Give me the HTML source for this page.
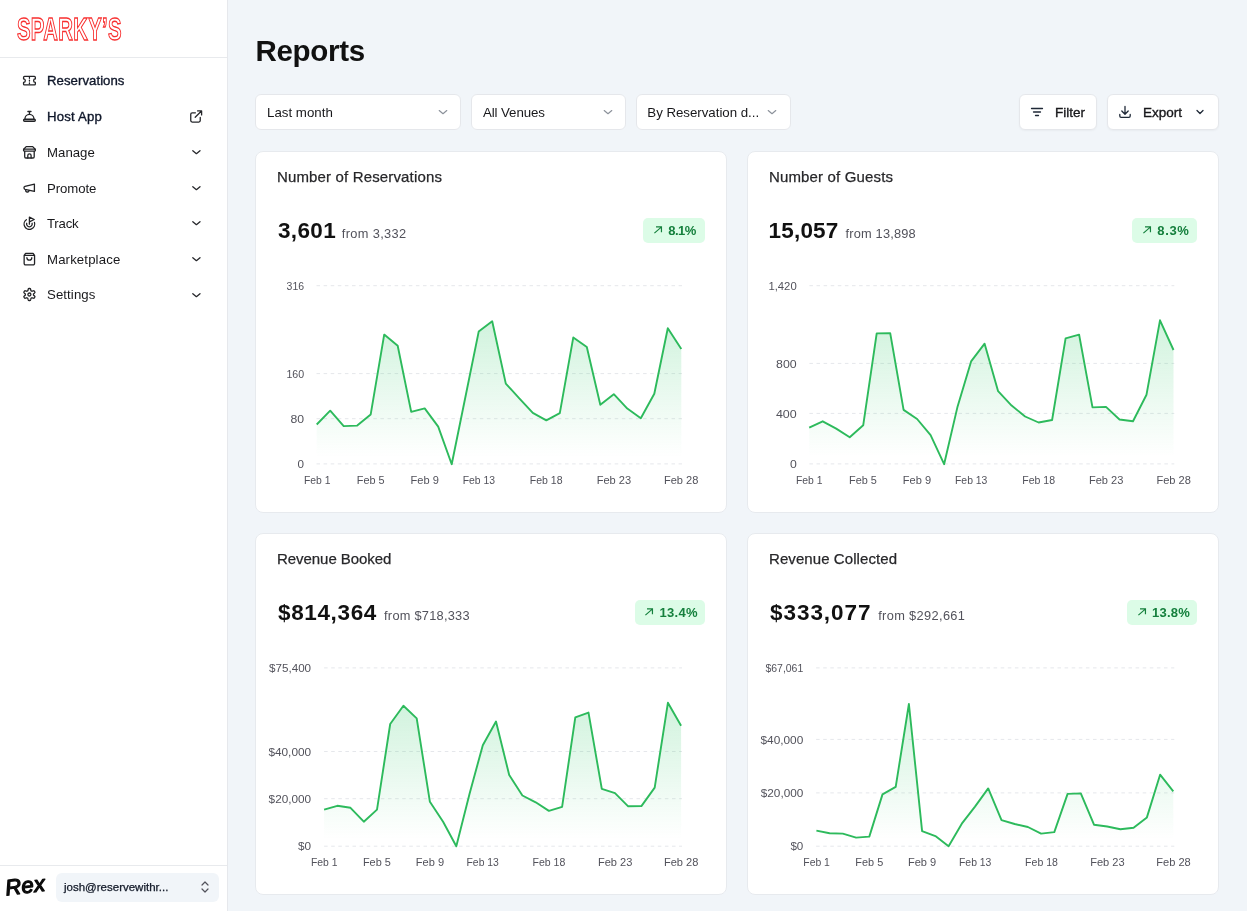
<!DOCTYPE html>
<html lang="en"><head><meta charset="utf-8"><title>Reports</title>
<style>
*{box-sizing:border-box;margin:0;padding:0}
html,body{width:1247px;height:911px;overflow:hidden}
body{position:relative;background:#f1f5f9;font-family:"Liberation Sans",Arial,sans-serif;color:#0f172a}
.side{position:absolute;left:0;top:0;width:228px;height:911px;background:#fff;border-right:1px solid #e6e8ec}
.hr1{position:absolute;left:0;top:57px;width:227px;height:1px;background:#e8eaed}
.hr2{position:absolute;left:0;top:865px;width:227px;height:1px;background:#e8eaed}
.ni{position:absolute;left:21px;width:16px;height:16px;fill:none;stroke:#222326;stroke-width:1.3;stroke-linecap:round;stroke-linejoin:round}
.nr{position:absolute;left:190px;width:12px;height:12px;fill:none;stroke:#26272b;stroke-width:1.3;stroke-linecap:round;stroke-linejoin:round}
.nt{position:absolute;left:47px;height:20px;line-height:20px;font-size:13.2px;font-weight:400;color:#18181b;white-space:nowrap}
.nt.md{color:#0f172a;-webkit-text-stroke:0.35px #0f172a}
.user{position:absolute;left:56px;top:873px;width:163px;height:29px;background:#f1f5f9;border-radius:6px;font-size:11.5px;line-height:29px;padding-left:8px;color:#111827;-webkit-text-stroke:0.25px #111827}
h1{position:absolute;left:255.5px;top:31px;font-size:29.5px;line-height:40px;font-weight:700;color:#111;letter-spacing:-0.3px}
.sel{position:absolute;top:94px;height:36px;background:#fff;border:1px solid #e5e7eb;border-radius:6px;font-size:13.3px;line-height:35px;padding-left:11px;color:#18181b;white-space:nowrap}
.sel svg{position:absolute;top:11px;width:12px;height:12px;fill:none;stroke:#8b919a;stroke-width:1.15;stroke-linecap:round;stroke-linejoin:round}
.btn{position:absolute;top:94px;height:36px;background:#fff;border:1px solid #e5e7eb;border-radius:6px;font-size:13.5px;line-height:35px;color:#18181b;white-space:nowrap;-webkit-text-stroke:0.35px #18181b;box-shadow:0 1px 2px rgba(0,0,0,0.04)}
.btn span{position:absolute;top:0}
.btn svg{position:absolute;fill:none;stroke:#1f2937;stroke-width:1.3;stroke-linecap:round;stroke-linejoin:round}
.card{position:absolute;width:472px;height:362px;background:#fff;border:1px solid #e7eaee;border-radius:8px}
.ct{position:absolute;left:21px;top:15px;font-size:15px;line-height:20px;color:#27272a;-webkit-text-stroke:0.25px #27272a;white-space:nowrap}
.cv{position:absolute;left:22px;top:62.6px;line-height:32px;white-space:nowrap}
.big{font-size:22.5px;font-weight:700;color:#111}
.from{font-size:12.8px;color:#52525b}
.badge{position:absolute;right:21.5px;top:66px;height:25px;background:#dcfce7;border-radius:5px;padding:0 0 0 9.4px;font-size:13px;font-weight:700;color:#15803d;line-height:25px;white-space:nowrap}
.badge svg{display:inline-block;vertical-align:0.1px;margin-right:5.6px}
.chart{position:absolute;left:0;top:0;width:1247px;height:911px;pointer-events:none}
.gl{stroke:#e5e7eb;stroke-width:1;stroke-dasharray:3.55 3.55}
.ax{font-size:11.5px;fill:#52525b;font-family:"Liberation Sans",Arial,sans-serif}
.ln{fill:none;stroke:#2dba5c;stroke-width:1.9;stroke-linejoin:round;stroke-linecap:butt}
</style></head><body><div id="root" style="position:absolute;left:0;top:0;width:1247px;height:911px;will-change:transform">
<div class="side">
<svg style="position:absolute;left:0;top:0" width="160" height="57" viewBox="0 0 160 57"><text x="0" y="0" transform="translate(17,40) scale(0.635,1)" font-family="Liberation Sans, Arial, sans-serif" font-weight="700" font-size="32" fill="#fff" stroke="#f83030" stroke-width="1.35" letter-spacing="0.5">SPARKY’S</text></svg>
<div class="hr1"></div>
<svg class="ni" style="top:73px" viewBox="0 0 16 16"><path d="M3.5 3.45 H13.4 a0.95 0.95 0 0 1 0.95 0.95 V5.9 a1.75 1.75 0 0 0 0 3.5 V10.9 a0.95 0.95 0 0 1 -0.95 0.95 H3.5 a0.95 0.95 0 0 1 -0.95 -0.95 V9.4 a1.75 1.75 0 0 0 0 -3.5 V4.4 a0.95 0.95 0 0 1 0.95 -0.95 Z"/><path d="M8.45 4.5 V5.3 M8.45 7.2 V8.1 M8.45 10 V10.8" /></svg><div class="nt md" style="top:71.37px;letter-spacing:0.045px">Reservations</div><svg class="ni" style="top:108px" viewBox="0 0 16 16"><path d="M3.95 10.9 A4.5 4.5 0 0 1 12.95 10.9"/><rect x="2.55" y="11.25" width="11.8" height="2.1" rx="1.05" fill="#a3a3a3"/><path d="M8.45 5.9 V3.5 M6.9 3.5 H10"/></svg><div class="nt md" style="top:107.17px;letter-spacing:0.19px">Host App</div><svg class="nr" style="top:109px;left:189px;width:15px;height:15px" viewBox="0 0 15 15"><path d="M6.4 3.85 H3.2 A1.45 1.45 0 0 0 1.75 5.3 V11.6 A1.45 1.45 0 0 0 3.2 13.05 H9.8 A1.45 1.45 0 0 0 11.25 11.6 V8.4"/><path d="M8.6 1.9 H12.6 V5.9 M12.5 2 L6.2 8.3"/></svg><svg class="ni" style="top:144px" viewBox="0 0 16 16"><path d="M2.7 5.2 L5.2 2.6 H11.7 L14.2 5.2"/><rect x="2.55" y="5.2" width="11.8" height="1.9" rx="0.5"/><path d="M3.7 7.3 V12.8 a1.2 1.2 0 0 0 1.2 1.2 H12 a1.2 1.2 0 0 0 1.2 -1.2 V7.3"/><path d="M6.8 14 V11.5 a1.65 1.65 0 0 1 3.3 0 V14"/></svg><div class="nt" style="top:143.07px;letter-spacing:0.03px">Manage</div><svg class="nr" style="top:146px" viewBox="0 0 12 12"><path d="M2.8 4.7 L6.4 7.7 L10 4.7"/></svg><svg class="ni" style="top:180px" viewBox="0 0 16 16"><path d="M13.4 4.1 L4.0 6.3 A1.6 1.6 0 0 0 4.0 9.3 L13.4 11.4 Z"/><path d="M4.7 9.7 V10.5 A1.6 1.3 0 0 0 8 10.8 V10.4"/></svg><div class="nt" style="top:178.57px;letter-spacing:-0.08px">Promote</div><svg class="nr" style="top:182px" viewBox="0 0 12 12"><path d="M2.8 4.7 L6.4 7.7 L10 4.7"/></svg><svg class="ni" style="top:215px" viewBox="0 0 16 16"><path d="M8.4 9.2 V2.2 L13.2 4.5 L8.4 6.8"/><path d="M5.36 4.66 A5.3 5.3 0 1 0 13.44 7.36"/><path d="M5.7 8.27 A2.8 2.8 0 1 0 11.1 8.27"/></svg><div class="nt" style="top:213.77px;letter-spacing:-0.2px">Track</div><svg class="nr" style="top:217px" viewBox="0 0 12 12"><path d="M2.8 4.7 L6.4 7.7 L10 4.7"/></svg><svg class="ni" style="top:251px" viewBox="0 0 16 16"><path d="M3.15 4.3 L4.6 2.35 H12.1 L13.55 4.3 V12.6 a1.35 1.35 0 0 1 -1.35 1.35 H4.5 a1.35 1.35 0 0 1 -1.35 -1.35 Z M3.15 4.3 H13.55"/><path d="M5.9 6.7 A2.45 2.45 0 0 0 10.8 6.7"/></svg><div class="nt" style="top:249.67px;letter-spacing:0.14px">Marketplace</div><svg class="nr" style="top:253px" viewBox="0 0 12 12"><path d="M2.8 4.7 L6.4 7.7 L10 4.7"/></svg><svg class="ni" style="top:287px" viewBox="0 0 16 16"><circle cx="8.4" cy="7.5" r="1.5"/><path d="M8.40 1.50 L8.66 1.51 L8.92 1.52 L9.18 1.55 L9.41 1.78 L9.58 2.19 L9.71 2.62 L9.80 3.06 L9.87 3.47 L9.97 3.71 L10.13 3.78 L10.29 3.86 L10.45 3.95 L10.60 4.04 L10.75 4.14 L10.90 4.25 L11.16 4.21 L11.55 4.07 L11.97 3.93 L12.41 3.82 L12.85 3.77 L13.16 3.85 L13.31 4.06 L13.46 4.28 L13.60 4.50 L13.72 4.73 L13.84 4.96 L13.94 5.20 L13.86 5.51 L13.59 5.86 L13.28 6.19 L12.95 6.49 L12.62 6.76 L12.46 6.96 L12.48 7.14 L12.50 7.32 L12.50 7.50 L12.50 7.68 L12.48 7.86 L12.46 8.04 L12.62 8.24 L12.95 8.51 L13.28 8.81 L13.59 9.14 L13.86 9.49 L13.94 9.80 L13.84 10.04 L13.72 10.27 L13.60 10.50 L13.46 10.72 L13.31 10.94 L13.16 11.15 L12.85 11.23 L12.41 11.18 L11.97 11.07 L11.55 10.93 L11.16 10.79 L10.90 10.75 L10.75 10.86 L10.60 10.96 L10.45 11.05 L10.29 11.14 L10.13 11.22 L9.97 11.29 L9.87 11.53 L9.80 11.94 L9.71 12.38 L9.58 12.81 L9.41 13.22 L9.18 13.45 L8.92 13.48 L8.66 13.49 L8.40 13.50 L8.14 13.49 L7.88 13.48 L7.62 13.45 L7.39 13.22 L7.22 12.81 L7.09 12.38 L7.00 11.94 L6.93 11.53 L6.83 11.29 L6.67 11.22 L6.51 11.14 L6.35 11.05 L6.20 10.96 L6.05 10.86 L5.90 10.75 L5.64 10.79 L5.25 10.93 L4.83 11.07 L4.39 11.18 L3.95 11.23 L3.64 11.15 L3.49 10.94 L3.34 10.72 L3.20 10.50 L3.08 10.27 L2.96 10.04 L2.86 9.80 L2.94 9.49 L3.21 9.14 L3.52 8.81 L3.85 8.51 L4.18 8.24 L4.34 8.04 L4.32 7.86 L4.30 7.68 L4.30 7.50 L4.30 7.32 L4.32 7.14 L4.34 6.96 L4.18 6.76 L3.85 6.49 L3.52 6.19 L3.21 5.86 L2.94 5.51 L2.86 5.20 L2.96 4.96 L3.08 4.73 L3.20 4.50 L3.34 4.28 L3.49 4.06 L3.64 3.85 L3.95 3.77 L4.39 3.82 L4.83 3.93 L5.25 4.07 L5.64 4.21 L5.90 4.25 L6.05 4.14 L6.20 4.04 L6.35 3.95 L6.51 3.86 L6.67 3.78 L6.83 3.71 L6.93 3.47 L7.00 3.06 L7.09 2.62 L7.22 2.19 L7.39 1.78 L7.62 1.55 L7.88 1.52 L8.14 1.51 Z"/></svg><div class="nt" style="top:285.37px;letter-spacing:0.1px">Settings</div><svg class="nr" style="top:289px" viewBox="0 0 12 12"><path d="M2.8 4.7 L6.4 7.7 L10 4.7"/></svg>
<div class="hr2"></div>
<svg style="position:absolute;left:0;top:866px" width="56" height="45" viewBox="0 0 56 45"><text transform="translate(6.3,29.4) rotate(-7)" font-family="Liberation Sans, Arial, sans-serif" font-style="italic" font-weight="400" font-size="22" fill="#0a0a0a" stroke="#0a0a0a" stroke-width="1.3" stroke-linejoin="round" stroke-linecap="round" letter-spacing="0.3">Rex</text></svg>
<div class="user">josh@reservewithr...<svg style="position:absolute;left:143px;top:7px" width="12" height="14" viewBox="0 0 12 14" fill="none" stroke="#52525b" stroke-width="1.2" stroke-linecap="round" stroke-linejoin="round"><path d="M3 5 L6 2 L9 5 M3 9 L6 12 L9 9"/></svg></div>
</div>
<h1>Reports</h1>
<div class="sel" style="left:255px;width:206px">Last month<svg style="left:180.5px" viewBox="0 0 12 12"><path d="M2.2 4.5 L6 7.7 L9.8 4.5"/></svg></div>
<div class="sel" style="left:471px;width:155px;letter-spacing:-0.1px">All Venues<svg style="left:129.5px" viewBox="0 0 12 12"><path d="M2.2 4.5 L6 7.7 L9.8 4.5"/></svg></div>
<div class="sel" style="left:636px;width:155px;padding-left:10.3px;letter-spacing:-0.03px">By Reservation d...<svg style="left:129.3px" viewBox="0 0 12 12"><path d="M2.2 4.5 L6 7.7 L9.8 4.5"/></svg></div>
<div class="btn" style="left:1019px;width:78px"><svg style="left:10px;top:10px" width="14" height="14" viewBox="0 0 14 14"><path d="M1.5 3.5 H12.5 M3.5 7 H10.5 M5.5 10.5 H8.5"/></svg><span style="left:35px">Filter</span></div>
<div class="btn" style="left:1107px;width:112px"><svg style="left:10px;top:10px" width="14" height="14" viewBox="0 0 14 14"><path d="M7 1.5 V9 M3.8 6 L7 9.2 L10.2 6 M1.8 9.5 V11 A1.3 1.3 0 0 0 3.1 12.3 H10.9 A1.3 1.3 0 0 0 12.2 11 V9.5"/></svg><span style="left:35px">Export</span><svg style="left:86px;top:11px" width="12" height="12" viewBox="0 0 12 12"><path d="M3 4.5 L6 7.5 L9 4.5"/></svg></div>
<div class="card" style="left:255px;top:151px">
<div class="ct" style="letter-spacing:0.15px">Number of Reservations</div>
<div class="cv"><span class="big" style="letter-spacing:0.36px;margin-left:0px">3,601</span><span class="from" style="letter-spacing:0.35px;margin-left:5.7px">from 3,332</span></div>
<div class="badge" style="width:61.3px"><svg width="10" height="10" viewBox="0 0 10 10"><path d="M1.4 8.1 L8.3 2.1 M3 1.95 H8.45 V7.3" fill="none" stroke="#15803d" stroke-width="1.2"/></svg><span style="letter-spacing:-0.5px">8.1%</span></div>
</div>
<div class="card" style="left:747px;top:151px">
<div class="ct" style="letter-spacing:0.15px">Number of Guests</div>
<div class="cv"><span class="big" style="letter-spacing:0.18px;margin-left:-1.4px">15,057</span><span class="from" style="letter-spacing:0.17px;margin-left:7.1px">from 13,898</span></div>
<div class="badge" style="width:64.2px"><svg width="10" height="10" viewBox="0 0 10 10"><path d="M1.4 8.1 L8.3 2.1 M3 1.95 H8.45 V7.3" fill="none" stroke="#15803d" stroke-width="1.2"/></svg><span style="letter-spacing:0.63px">8.3%</span></div>
</div>
<div class="card" style="left:255px;top:533px">
<div class="ct" style="letter-spacing:-0.05px">Revenue Booked</div>
<div class="cv"><span class="big" style="letter-spacing:0.64px;margin-left:0px">$814,364</span><span class="from" style="letter-spacing:0.25px;margin-left:7.1px">from $718,333</span></div>
<div class="badge" style="width:70px"><svg width="10" height="10" viewBox="0 0 10 10"><path d="M1.4 8.1 L8.3 2.1 M3 1.95 H8.45 V7.3" fill="none" stroke="#15803d" stroke-width="1.2"/></svg><span style="letter-spacing:0.33px">13.4%</span></div>
</div>
<div class="card" style="left:747px;top:533px">
<div class="ct" style="letter-spacing:0.08px">Revenue Collected</div>
<div class="cv"><span class="big" style="letter-spacing:0.95px;margin-left:0px">$333,077</span><span class="from" style="letter-spacing:0.35px;margin-left:6.75px">from $292,661</span></div>
<div class="badge" style="width:69.4px"><svg width="10" height="10" viewBox="0 0 10 10"><path d="M1.4 8.1 L8.3 2.1 M3 1.95 H8.45 V7.3" fill="none" stroke="#15803d" stroke-width="1.2"/></svg><span style="letter-spacing:0.2px">13.8%</span></div>
</div>

<svg class="chart" viewBox="0 0 1247 911"><defs></defs>
<linearGradient id="g1" gradientUnits="userSpaceOnUse" x1="0" y1="321.3" x2="0" y2="463.9"><stop offset="0" stop-color="#22c55e" stop-opacity="0.21"/><stop offset="0.95" stop-color="#22c55e" stop-opacity="0"/></linearGradient>
<line x1="316.5" y1="285.7" x2="682" y2="285.7" class="gl"/>
<text x="304.1" y="289.9" text-anchor="end" class="ax" textLength="17.5" lengthAdjust="spacingAndGlyphs">316</text>
<line x1="316.5" y1="373.6" x2="682" y2="373.6" class="gl"/>
<text x="304.1" y="377.8" text-anchor="end" class="ax" textLength="17.7" lengthAdjust="spacingAndGlyphs">160</text>
<line x1="316.5" y1="418.7" x2="682" y2="418.7" class="gl"/>
<text x="304.1" y="422.9" text-anchor="end" class="ax" textLength="13.6" lengthAdjust="spacingAndGlyphs">80</text>
<line x1="316.5" y1="463.9" x2="682" y2="463.9" class="gl"/>
<text x="304.1" y="468.1" text-anchor="end" class="ax" textLength="6.5" lengthAdjust="spacingAndGlyphs">0</text>
<path d="M316.7,424.5 L330.2,410.7 L343.7,426.1 L357.2,425.6 L370.7,414.4 L384.2,334.6 L397.7,345.8 L411.2,411.9 L424.7,408.4 L438.2,426.6 L451.7,464.2 L465.2,398.0 L478.7,331.6 L492.2,321.3 L505.8,383.6 L519.3,398.3 L532.8,412.9 L546.3,420.3 L559.8,413.2 L573.3,337.4 L586.8,347.0 L600.3,404.8 L613.8,394.2 L627.3,408.6 L640.8,418.2 L654.3,393.7 L667.8,328.3 L681.3,349.0 L681.3,463.9 L316.7,463.9 Z" fill="url(#g1)"/>
<path d="M316.7,424.5 L330.2,410.7 L343.7,426.1 L357.2,425.6 L370.7,414.4 L384.2,334.6 L397.7,345.8 L411.2,411.9 L424.7,408.4 L438.2,426.6 L451.7,464.2 L465.2,398.0 L478.7,331.6 L492.2,321.3 L505.8,383.6 L519.3,398.3 L532.8,412.9 L546.3,420.3 L559.8,413.2 L573.3,337.4 L586.8,347.0 L600.3,404.8 L613.8,394.2 L627.3,408.6 L640.8,418.2 L654.3,393.7 L667.8,328.3 L681.3,349.0" class="ln"/>
<text x="317.2" y="484.2" text-anchor="middle" class="ax" textLength="26.6" lengthAdjust="spacingAndGlyphs">Feb 1</text>
<text x="370.7" y="484.2" text-anchor="middle" class="ax" textLength="27.9" lengthAdjust="spacingAndGlyphs">Feb 5</text>
<text x="424.7" y="484.2" text-anchor="middle" class="ax" textLength="28.3" lengthAdjust="spacingAndGlyphs">Feb 9</text>
<text x="478.9" y="484.2" text-anchor="middle" class="ax" textLength="32.4" lengthAdjust="spacingAndGlyphs">Feb 13</text>
<text x="546.2" y="484.2" text-anchor="middle" class="ax" textLength="32.8" lengthAdjust="spacingAndGlyphs">Feb 18</text>
<text x="613.9000000000001" y="484.2" text-anchor="middle" class="ax" textLength="34.5" lengthAdjust="spacingAndGlyphs">Feb 23</text>
<text x="681.2" y="484.2" text-anchor="middle" class="ax" textLength="34.5" lengthAdjust="spacingAndGlyphs">Feb 28</text>
<linearGradient id="g2" gradientUnits="userSpaceOnUse" x1="0" y1="320.3" x2="0" y2="463.9"><stop offset="0" stop-color="#22c55e" stop-opacity="0.21"/><stop offset="0.95" stop-color="#22c55e" stop-opacity="0"/></linearGradient>
<line x1="809.4" y1="285.7" x2="1174.3" y2="285.7" class="gl"/>
<text x="796.7" y="289.9" text-anchor="end" class="ax" textLength="28.3" lengthAdjust="spacingAndGlyphs">1,420</text>
<line x1="809.4" y1="363.4" x2="1174.3" y2="363.4" class="gl"/>
<text x="796.7" y="367.6" text-anchor="end" class="ax" textLength="20.6" lengthAdjust="spacingAndGlyphs">800</text>
<line x1="809.4" y1="413.4" x2="1174.3" y2="413.4" class="gl"/>
<text x="796.7" y="417.6" text-anchor="end" class="ax" textLength="20.8" lengthAdjust="spacingAndGlyphs">400</text>
<line x1="809.4" y1="463.9" x2="1174.3" y2="463.9" class="gl"/>
<text x="796.7" y="468.1" text-anchor="end" class="ax" textLength="6.8" lengthAdjust="spacingAndGlyphs">0</text>
<path d="M809.2,427.6 L822.7,421.3 L836.2,428.6 L849.7,437.2 L863.2,425.3 L876.7,333.4 L890.2,333.1 L903.6,409.9 L917.1,419.0 L930.6,435.2 L944.1,464.2 L957.6,406.4 L971.1,361.4 L984.6,343.7 L998.1,391.2 L1011.6,405.6 L1025.1,416.5 L1038.6,422.5 L1052.1,420.0 L1065.6,338.4 L1079.1,334.6 L1092.5,407.4 L1106.0,406.9 L1119.5,419.5 L1133.0,421.3 L1146.5,394.7 L1160.0,320.3 L1173.5,350.0 L1173.5,463.9 L809.2,463.9 Z" fill="url(#g2)"/>
<path d="M809.2,427.6 L822.7,421.3 L836.2,428.6 L849.7,437.2 L863.2,425.3 L876.7,333.4 L890.2,333.1 L903.6,409.9 L917.1,419.0 L930.6,435.2 L944.1,464.2 L957.6,406.4 L971.1,361.4 L984.6,343.7 L998.1,391.2 L1011.6,405.6 L1025.1,416.5 L1038.6,422.5 L1052.1,420.0 L1065.6,338.4 L1079.1,334.6 L1092.5,407.4 L1106.0,406.9 L1119.5,419.5 L1133.0,421.3 L1146.5,394.7 L1160.0,320.3 L1173.5,350.0" class="ln"/>
<text x="809.2" y="484.2" text-anchor="middle" class="ax" textLength="26.6" lengthAdjust="spacingAndGlyphs">Feb 1</text>
<text x="863.0" y="484.2" text-anchor="middle" class="ax" textLength="27.9" lengthAdjust="spacingAndGlyphs">Feb 5</text>
<text x="917.0" y="484.2" text-anchor="middle" class="ax" textLength="28.3" lengthAdjust="spacingAndGlyphs">Feb 9</text>
<text x="971.2" y="484.2" text-anchor="middle" class="ax" textLength="32.4" lengthAdjust="spacingAndGlyphs">Feb 13</text>
<text x="1038.7" y="484.2" text-anchor="middle" class="ax" textLength="32.8" lengthAdjust="spacingAndGlyphs">Feb 18</text>
<text x="1106.2" y="484.2" text-anchor="middle" class="ax" textLength="34.5" lengthAdjust="spacingAndGlyphs">Feb 23</text>
<text x="1173.7" y="484.2" text-anchor="middle" class="ax" textLength="34.5" lengthAdjust="spacingAndGlyphs">Feb 28</text>
<linearGradient id="g3" gradientUnits="userSpaceOnUse" x1="0" y1="702.8" x2="0" y2="846.2"><stop offset="0" stop-color="#22c55e" stop-opacity="0.21"/><stop offset="0.95" stop-color="#22c55e" stop-opacity="0"/></linearGradient>
<line x1="324.1" y1="667.9" x2="682" y2="667.9" class="gl"/>
<text x="311.1" y="672.1" text-anchor="end" class="ax" textLength="42.1" lengthAdjust="spacingAndGlyphs">$75,400</text>
<line x1="324.1" y1="751.5" x2="682" y2="751.5" class="gl"/>
<text x="311.1" y="755.7" text-anchor="end" class="ax" textLength="42.7" lengthAdjust="spacingAndGlyphs">$40,000</text>
<line x1="324.1" y1="798.7" x2="682" y2="798.7" class="gl"/>
<text x="311.1" y="802.9" text-anchor="end" class="ax" textLength="42.5" lengthAdjust="spacingAndGlyphs">$20,000</text>
<line x1="324.1" y1="846.2" x2="682" y2="846.2" class="gl"/>
<text x="311.1" y="850.4" text-anchor="end" class="ax" textLength="13.1" lengthAdjust="spacingAndGlyphs">$0</text>
<path d="M324.1,809.6 L337.3,805.8 L350.5,807.8 L363.8,821.7 L377.0,809.6 L390.2,724.0 L403.4,705.8 L416.7,718.4 L429.9,801.8 L443.1,821.7 L456.3,846.3 L469.5,793.9 L482.8,745.2 L496.0,721.5 L509.2,775.0 L522.4,795.5 L535.7,802.3 L548.9,810.9 L562.1,806.8 L575.3,717.4 L588.5,712.6 L601.8,788.9 L615.0,793.2 L628.2,806.3 L641.4,806.1 L654.7,787.6 L667.9,702.8 L681.1,725.8 L681.1,846.2 L324.1,846.2 Z" fill="url(#g3)"/>
<path d="M324.1,809.6 L337.3,805.8 L350.5,807.8 L363.8,821.7 L377.0,809.6 L390.2,724.0 L403.4,705.8 L416.7,718.4 L429.9,801.8 L443.1,821.7 L456.3,846.3 L469.5,793.9 L482.8,745.2 L496.0,721.5 L509.2,775.0 L522.4,795.5 L535.7,802.3 L548.9,810.9 L562.1,806.8 L575.3,717.4 L588.5,712.6 L601.8,788.9 L615.0,793.2 L628.2,806.3 L641.4,806.1 L654.7,787.6 L667.9,702.8 L681.1,725.8" class="ln"/>
<text x="324.2" y="866.2" text-anchor="middle" class="ax" textLength="26.6" lengthAdjust="spacingAndGlyphs">Feb 1</text>
<text x="376.9" y="866.2" text-anchor="middle" class="ax" textLength="27.9" lengthAdjust="spacingAndGlyphs">Feb 5</text>
<text x="429.9" y="866.2" text-anchor="middle" class="ax" textLength="28.3" lengthAdjust="spacingAndGlyphs">Feb 9</text>
<text x="482.7" y="866.2" text-anchor="middle" class="ax" textLength="32.4" lengthAdjust="spacingAndGlyphs">Feb 13</text>
<text x="548.9000000000001" y="866.2" text-anchor="middle" class="ax" textLength="32.8" lengthAdjust="spacingAndGlyphs">Feb 18</text>
<text x="615.2" y="866.2" text-anchor="middle" class="ax" textLength="34.5" lengthAdjust="spacingAndGlyphs">Feb 23</text>
<text x="681.2" y="866.2" text-anchor="middle" class="ax" textLength="34.5" lengthAdjust="spacingAndGlyphs">Feb 28</text>
<linearGradient id="g4" gradientUnits="userSpaceOnUse" x1="0" y1="704.0" x2="0" y2="846.2"><stop offset="0" stop-color="#22c55e" stop-opacity="0.21"/><stop offset="0.95" stop-color="#22c55e" stop-opacity="0"/></linearGradient>
<line x1="816.1" y1="667.9" x2="1174.3" y2="667.9" class="gl"/>
<text x="803.3" y="672.1" text-anchor="end" class="ax" textLength="37.9" lengthAdjust="spacingAndGlyphs">$67,061</text>
<line x1="816.1" y1="739.4" x2="1174.3" y2="739.4" class="gl"/>
<text x="803.3" y="743.6" text-anchor="end" class="ax" textLength="42.8" lengthAdjust="spacingAndGlyphs">$40,000</text>
<line x1="816.1" y1="792.9" x2="1174.3" y2="792.9" class="gl"/>
<text x="803.3" y="797.1" text-anchor="end" class="ax" textLength="42.5" lengthAdjust="spacingAndGlyphs">$20,000</text>
<line x1="816.1" y1="846.2" x2="1174.3" y2="846.2" class="gl"/>
<text x="803.3" y="850.4" text-anchor="end" class="ax" textLength="12.9" lengthAdjust="spacingAndGlyphs">$0</text>
<path d="M816.4,830.6 L829.6,833.3 L842.8,833.6 L856.1,837.6 L869.3,836.6 L882.5,794.4 L895.7,786.9 L908.9,704.0 L922.1,831.1 L935.4,836.1 L948.6,846.2 L961.8,823.7 L975.0,806.6 L988.2,788.4 L1001.5,820.2 L1014.7,824.0 L1027.9,827.0 L1041.1,833.6 L1054.3,832.1 L1067.6,793.9 L1080.8,793.4 L1094.0,824.7 L1107.2,826.5 L1120.4,829.3 L1133.6,827.8 L1146.9,817.4 L1160.1,774.7 L1173.3,791.4 L1173.3,846.2 L816.4,846.2 Z" fill="url(#g4)"/>
<path d="M816.4,830.6 L829.6,833.3 L842.8,833.6 L856.1,837.6 L869.3,836.6 L882.5,794.4 L895.7,786.9 L908.9,704.0 L922.1,831.1 L935.4,836.1 L948.6,846.2 L961.8,823.7 L975.0,806.6 L988.2,788.4 L1001.5,820.2 L1014.7,824.0 L1027.9,827.0 L1041.1,833.6 L1054.3,832.1 L1067.6,793.9 L1080.8,793.4 L1094.0,824.7 L1107.2,826.5 L1120.4,829.3 L1133.6,827.8 L1146.9,817.4 L1160.1,774.7 L1173.3,791.4" class="ln"/>
<text x="816.6" y="866.2" text-anchor="middle" class="ax" textLength="26.6" lengthAdjust="spacingAndGlyphs">Feb 1</text>
<text x="869.3000000000001" y="866.2" text-anchor="middle" class="ax" textLength="27.9" lengthAdjust="spacingAndGlyphs">Feb 5</text>
<text x="922.1" y="866.2" text-anchor="middle" class="ax" textLength="28.3" lengthAdjust="spacingAndGlyphs">Feb 9</text>
<text x="975.2" y="866.2" text-anchor="middle" class="ax" textLength="32.4" lengthAdjust="spacingAndGlyphs">Feb 13</text>
<text x="1041.5" y="866.2" text-anchor="middle" class="ax" textLength="32.8" lengthAdjust="spacingAndGlyphs">Feb 18</text>
<text x="1107.4" y="866.2" text-anchor="middle" class="ax" textLength="34.5" lengthAdjust="spacingAndGlyphs">Feb 23</text>
<text x="1173.5" y="866.2" text-anchor="middle" class="ax" textLength="34.5" lengthAdjust="spacingAndGlyphs">Feb 28</text>
</svg>
</div></body></html>
